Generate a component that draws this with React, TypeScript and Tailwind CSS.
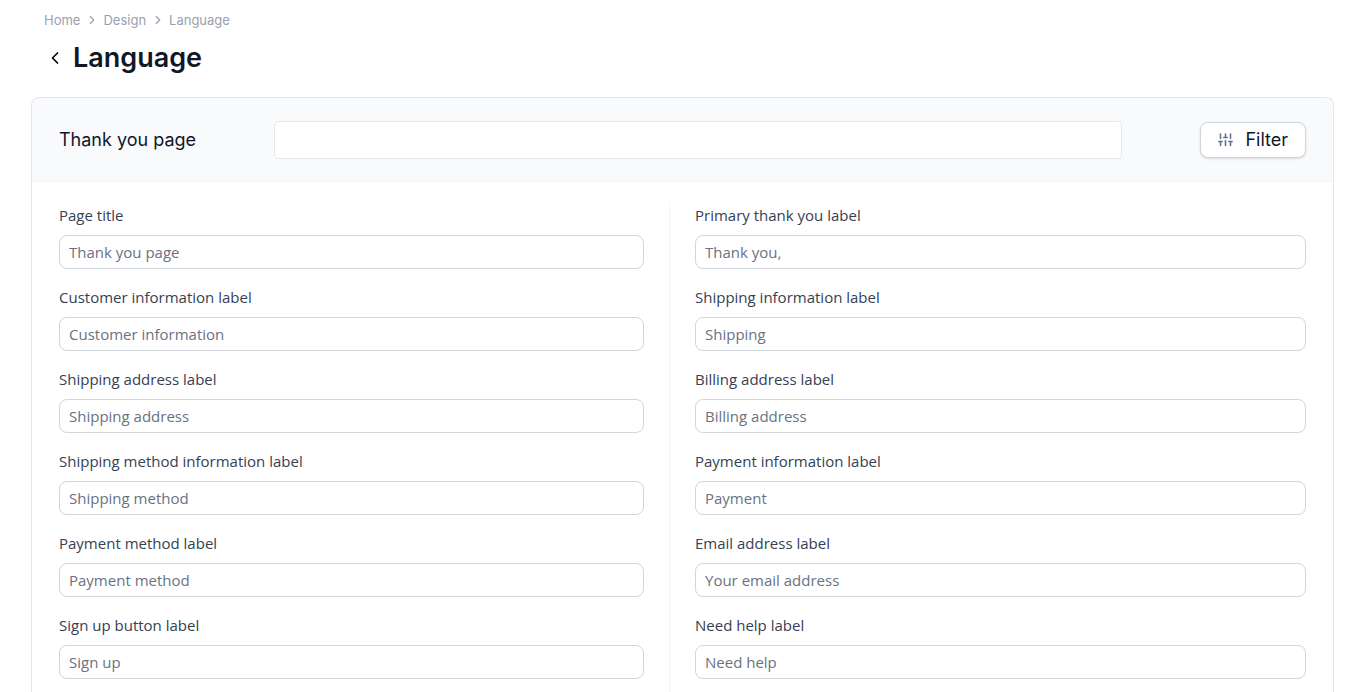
import { useId } from 'react'
import { ChevronLeft, ChevronRight } from 'lucide-react'

const crumbs = ['Home', 'Design', 'Language']

const leftFields = [
  { label: 'Page title', placeholder: 'Thank you page' },
  { label: 'Customer information label', placeholder: 'Customer information' },
  { label: 'Shipping address label', placeholder: 'Shipping address' },
  { label: 'Shipping method information label', placeholder: 'Shipping method' },
  { label: 'Payment method label', placeholder: 'Payment method' },
  { label: 'Sign up button label', placeholder: 'Sign up' },
]

const rightFields = [
  { label: 'Primary thank you label', placeholder: 'Thank you,' },
  { label: 'Shipping information label', placeholder: 'Shipping' },
  { label: 'Billing address label', placeholder: 'Billing address' },
  { label: 'Payment information label', placeholder: 'Payment' },
  { label: 'Email address label', placeholder: 'Your email address' },
  { label: 'Need help label', placeholder: 'Need help' },
]

function FilterIcon() {
  return (
    <svg
      className="size-4 text-slate-500"
      viewBox="0 0 16 16"
      fill="none"
      stroke="currentColor"
      strokeWidth="1.6"
      strokeLinecap="round"
      aria-hidden="true"
    >
      <path d="M2.5 2v4.5M2.5 9.5V13.5M7.5 2v3M7.5 8.5v5M12.5 2v4.5M12.5 9.5V13.5" />
      <path d="M.8 9.5h3.4M5.8 5.5h3.4M10.8 9.5h3.4" />
    </svg>
  )
}

function Field({ label, placeholder }: { label: string; placeholder: string }) {
  const id = useId()

  return (
    <div className="flex flex-col gap-2">
      <label htmlFor={id} className="text-[15px] leading-6 text-gray-700">
        {label}
      </label>
      <input
        id={id}
        type="text"
        placeholder={placeholder}
        className="h-[34px] w-full rounded-lg border border-gray-300 bg-white px-[9px] text-[15px] placeholder:text-gray-500"
      />
    </div>
  )
}

export default function App() {
  return (
    <div className="min-h-screen bg-white pt-2 pr-[22px] pl-[31px] font-['Inter',sans-serif]">
      <nav aria-label="Breadcrumb" className="pl-[13px]">
        <ol className="flex items-center gap-[5px] text-[13px] leading-6 text-gray-400">
          {crumbs.map((crumb, i) => (
            <li key={crumb} className="flex items-center gap-1">
              {i > 0 && <ChevronRight className="size-3.5" />}
              <a href="#">{crumb}</a>
            </li>
          ))}
        </ol>
      </nav>

      <div className="mt-2 flex items-center gap-2 pl-3.5">
        <button type="button" aria-label="Back">
          <ChevronLeft className="size-5" />
        </button>
        <h1 className="text-[27px] leading-9 font-semibold text-gray-900">Language</h1>
      </div>

      <section className="mt-[21px] rounded-t-lg border border-b-0 border-gray-200">
        <header className="flex items-center rounded-t-lg border-b border-gray-100 bg-slate-50 px-[27px] pt-[23px] pb-[22px]">
          <label htmlFor="search" className="w-[215px] text-lg text-gray-900">
            Thank you page
          </label>
          <input
            id="search"
            type="text"
            className="mr-[78px] h-[38px] min-w-0 flex-1 rounded border border-gray-200 bg-white px-3"
          />
          <button
            type="button"
            className="flex h-9 items-center gap-[11px] rounded-lg border border-gray-300 bg-white px-[17px] text-lg text-gray-900 shadow-sm"
          >
            <FilterIcon />
            Filter
          </button>
        </header>

        <div className="grid grid-cols-2 gap-[25px] px-[27px] pt-[21px] font-['Open_Sans',sans-serif]">
          <div className="flex flex-col gap-4 border-r border-gray-100 pr-[25px] pb-4">
            {leftFields.map((field) => (
              <Field key={field.label} {...field} />
            ))}
          </div>
          <div className="flex flex-col gap-4 pb-4">
            {rightFields.map((field) => (
              <Field key={field.label} {...field} />
            ))}
          </div>
        </div>
      </section>
    </div>
  )
}
